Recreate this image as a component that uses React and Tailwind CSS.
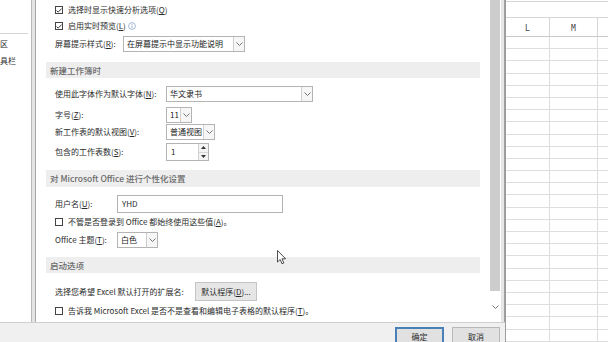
const Chevron = () => (
  <svg width="7" height="4" viewBox="0 0 7 4">
    <path d="M0.5 0.5 L3.5 3.5 L6.5 0.5" fill="none" stroke="#666" strokeWidth="0.9" />
  </svg>
);

function Select({ value, w }) {
  return (
    <div className={`flex h-[16px] border border-[#b4b4b4] bg-white ${w}`}>
      <div className="flex flex-1 items-center overflow-hidden px-[3px] text-[#222]">{value}</div>
      <div className="flex w-[11px] items-center justify-center border-l border-[#cfcfcf] bg-[#f6f6f6]">
        <Chevron />
      </div>
    </div>
  );
}

function Check({ checked }) {
  return (
    <div className="mr-[5px] flex h-[8px] w-[8px] items-center justify-center border border-[#444] bg-white">
      {checked && (
        <svg width="6" height="5" viewBox="0 0 6 5">
          <path d="M0.5 2.5 L2.2 4.2 L5.5 0.6" fill="none" stroke="#222" strokeWidth="0.9" />
        </svg>
      )}
    </div>
  );
}

function Header({ children, className }) {
  return (
    <div className={`ml-[10px] flex h-[16px] w-[434px] items-center bg-[#eeeeee] pl-[4px] text-[8.5px] font-medium text-[#6a6a6a] ${className}`}>
      {children}
    </div>
  );
}

function Row({ children, className }) {
  return <div className={`flex items-center pl-[19px] ${className}`}>{children}</div>;
}

const rows = Array.from({ length: 25 });

export default function App() {
  return (
    <div className="relative flex h-[342px] w-[608px] overflow-hidden bg-white font-['Noto_Sans_CJK_SC',sans-serif] text-[8px] leading-none text-[#2a2a2a]">
      {/* dialog */}
      <div className="flex w-[505px] flex-col bg-[#f0f0f0]">
        <div className="flex h-[322px]">
          {/* left nav, mostly off screen */}
          <div className="w-[32px] overflow-hidden border-r border-[#b8b8b8] bg-white">
            <div className="mt-[33px] h-px w-[28px] bg-[#d6d6d6]" />
            <div className="mt-[6px] whitespace-nowrap">区</div>
            <div className="mt-[9px] whitespace-nowrap">具栏</div>
          </div>
          <div className="w-[3px] bg-[#e4e4e4]" />

          {/* main */}
          <div className="flex w-[466px] border-l border-[#a8a8a8] bg-white">
            <div className="flex flex-1 flex-col whitespace-nowrap">
              <Row className="mt-[2px] h-[16px]">
                <Check checked />
                <span>选择时显示快速分析选项(<u>Q</u>)</span>
              </Row>
              <Row className="h-[16px]">
                <Check checked />
                <span>启用实时预览(<u>L</u>)</span>
                <svg className="ml-[2px]" width="8" height="8" viewBox="0 0 8 8">
                  <circle cx="4" cy="4" r="3.4" fill="none" stroke="#7d9ac4" strokeWidth="0.7" />
                  <path d="M4 3.4 V6" stroke="#7d9ac4" strokeWidth="0.8" />
                  <circle cx="4" cy="2.2" r="0.5" fill="#7d9ac4" />
                </svg>
              </Row>
              <Row className="mt-[1px] h-[18px]">
                <span className="w-[68px]">屏幕提示样式(<u>R</u>):</span>
                <Select w="w-[122px]" value="在屏幕提示中显示功能说明" />
              </Row>

              <Header className="mt-[9px]">新建工作簿时</Header>

              <Row className="mt-[8px] h-[16px]">
                <span className="w-[111px]">使用此字体作为默认字体(<u>N</u>):</span>
                <Select w="w-[147px]" value="华文隶书" />
              </Row>
              <Row className="mt-[5px] h-[16px]">
                <span className="w-[111px]">字号(<u>Z</u>):</span>
                <Select w="w-[26px]" value="11" />
              </Row>
              <Row className="mt-[1px] h-[16px]">
                <span className="w-[111px]">新工作表的默认视图(<u>V</u>):</span>
                <Select w="w-[49px]" value="普通视图" />
              </Row>
              <Row className="mt-[3px] h-[18px]">
                <span className="w-[111px]">包含的工作表数(<u>S</u>):</span>
                <div className="flex h-[18px] w-[43px] border border-[#b4b4b4] bg-white">
                  <div className="flex flex-1 items-center px-[4px]">1</div>
                  <div className="flex w-[10px] flex-col border-l border-[#cfcfcf]">
                    <div className="flex flex-1 items-center justify-center border-b border-[#d8d8d8] bg-[#f4f4f4]">
                      <svg width="5" height="3" viewBox="0 0 5 3"><path d="M0 3 L2.5 0 L5 3 Z" fill="#333" /></svg>
                    </div>
                    <div className="flex flex-1 items-center justify-center bg-[#f4f4f4]">
                      <svg width="5" height="3" viewBox="0 0 5 3"><path d="M0 0 L2.5 3 L5 0 Z" fill="#333" /></svg>
                    </div>
                  </div>
                </div>
              </Row>

              <Header className="mt-[9px] h-[17px]">对 Microsoft Office 进行个性化设置</Header>

              <Row className="mt-[8px] h-[18px]">
                <span className="w-[62px]">用户名(<u>U</u>):</span>
                <div className="flex h-[18px] w-[166px] items-center border border-[#b4b4b4] bg-white px-[4px]">YHD</div>
              </Row>
              <Row className="mt-[1px] h-[16px]">
                <Check />
                <span>不管是否登录到 Office 都始终使用这些值(<u>A</u>)。</span>
              </Row>
              <Row className="mt-[2px] h-[16px]">
                <span className="w-[62px]">Office 主题(<u>T</u>):</span>
                <Select w="w-[41px]" value="白色" />
              </Row>

              <Header className="mt-[9px]">启动选项</Header>

              <Row className="mt-[9px] h-[19px]">
                <span className="w-[140px]">选择您希望 Excel 默认打开的扩展名:</span>
                <div className="flex h-[19px] w-[62px] items-center justify-center border border-[#c4c4c4] bg-[#e6e6e6]">
                  默认程序(<u>D</u>)...
                </div>
              </Row>
              <Row className="mt-[2px] h-[16px]">
                <Check />
                <span>告诉我 Microsoft Excel 是否不是查看和编辑电子表格的默认程序(<u>T</u>)。</span>
              </Row>
            </div>

            {/* scrollbar */}
            <div className="flex w-[12px] flex-col items-center">
              <div className="h-[291px] w-[10px] bg-[#cdcdcd]" />
              <div className="flex flex-1 items-center justify-center">
                <Chevron />
              </div>
            </div>
          </div>
          <div className="w-[4px] border-r border-[#a0a0a0] bg-[#e6e6e6]" />
        </div>

        {/* footer */}
        <div className="flex flex-1 items-start justify-end gap-[8px] overflow-hidden border-t border-[#d0d0d0] pr-[5px] pt-[4px]">
          <div className="flex h-[20px] w-[49px] items-center justify-center border-2 border-[#4a80b8] bg-[#e1e1e1]">确定</div>
          <div className="flex h-[20px] w-[48px] items-center justify-center border border-[#b8b8b8] bg-[#e1e1e1]">取消</div>
        </div>
      </div>

      {/* excel sheet behind */}
      <div className="flex-1 border-l border-[#9c9c9c] bg-white">
        <div className="h-[2px] border-b border-[#d6d6d6]" />
        <div className="h-[16px] border-b border-[#d6d6d6]" />
        <div className="flex h-[19px] border-b border-[#c8c8c8] font-['DejaVu_Sans_Mono',monospace] text-[8px] text-[#444]">
          <div className="flex w-[44px] items-end justify-center border-r border-[#d6d6d6] pb-[3px]">L</div>
          <div className="flex w-[48px] items-end justify-center border-r border-[#d6d6d6] pb-[3px]">M</div>
          <div className="flex-1" />
        </div>
        {rows.map((_, i) => (
          <div key={i} className="flex h-[12.2px] border-b border-[#dedede]">
            <div className="w-[44px] border-r border-[#dedede]" />
            <div className="w-[48px] border-r border-[#dedede]" />
            <div className="flex-1" />
          </div>
        ))}
      </div>

      {/* mouse pointer */}
      <svg className="absolute left-[277px] top-[250px]" width="10" height="15" viewBox="0 0 10 15">
        <path d="M0.5 0.5 V12 L3.2 9.5 L5 13.8 L6.8 13 L5 8.8 H8.6 Z" fill="white" stroke="#222" strokeWidth="0.8" strokeLinejoin="round" />
      </svg>
    </div>
  );
}
